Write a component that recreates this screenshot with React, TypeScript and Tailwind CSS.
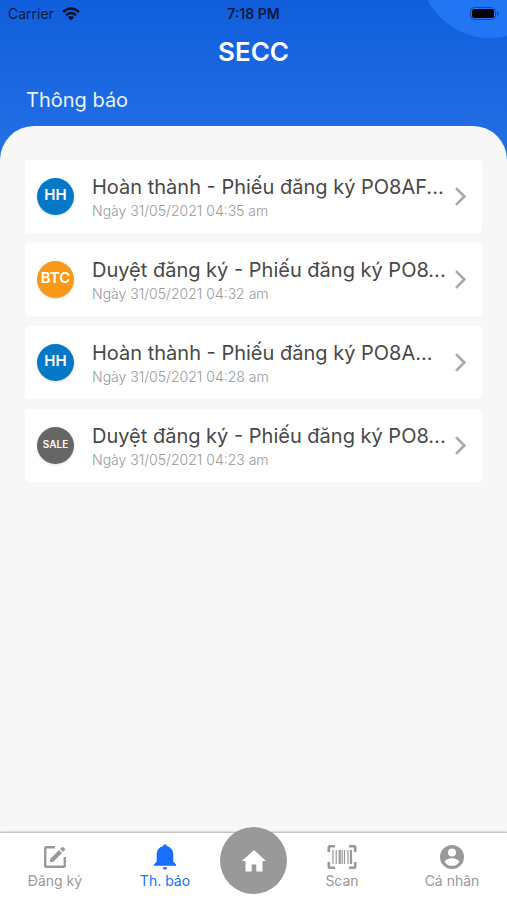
import type { ReactNode } from "react";

type Notice = { badge: string; title: string; date: string; tone: string };

const notices: Notice[] = [
  { badge: "HH", title: "Hoàn thành - Phiếu đăng ký PO8AF...", date: "Ngày 31/05/2021 04:35 am", tone: "bg-[#0378c6] text-[15px]" },
  { badge: "BTC", title: "Duyệt đăng ký - Phiếu đăng ký PO8...", date: "Ngày 31/05/2021 04:32 am", tone: "bg-[#f99a17] text-[15px]" },
  { badge: "HH", title: "Hoàn thành - Phiếu đăng ký PO8A...", date: "Ngày 31/05/2021 04:28 am", tone: "bg-[#0378c6] text-[15px]" },
  { badge: "SALE", title: "Duyệt đăng ký - Phiếu đăng ký PO8...", date: "Ngày 31/05/2021 04:23 am", tone: "bg-[#666666] text-[10px]" },
];

function StatusBar() {
  return (
    <div className="relative grid h-7 grid-cols-3 items-center px-2 text-sm text-[#061a3c]">
      <div className="flex items-center gap-2 leading-5">
        Carrier
        <svg width="18" height="14" viewBox="0 0 18 14" fill="none" stroke="#061024" strokeWidth="2.6" aria-hidden="true">
          <path d="M1 5Q9-2 17 5" />
          <path d="M4 8.2Q9 3.8 14 8.2" />
          <path d="M9 13.5 5.8 10.3Q9 7.8 12.2 10.3Z" fill="#061024" stroke="none" />
        </svg>
      </div>
      <div className="text-center font-semibold">7:18 PM</div>
      <svg className="justify-self-end" width="30" height="14" viewBox="0 0 30 14" aria-hidden="true">
        <rect x="1.5" y="0.5" width="25" height="12" rx="4" fill="none" stroke="#16479b" />
        <rect x="3" y="2" width="22" height="9" rx="2.5" fill="#000" />
        <path d="M28 4q3 2.500 0 5z" fill="#16479b" />
      </svg>
    </div>
  );
}

function NoticeRow({ notice }: { notice: Notice }) {
  return (
    <li>
      <a href="#notice" className="flex h-[73px] items-center rounded-sm bg-white pl-3 pr-4">
        <span className={`flex size-[37px] shrink-0 items-center justify-center rounded-full pb-0.5 font-semibold text-white shadow-sm ${notice.tone}`}>
          {notice.badge}
        </span>
        <span className="ml-[18px] min-w-0 flex-1">
          <span className="block overflow-hidden whitespace-nowrap text-xl leading-7 text-[#484848]">{notice.title}</span>
          <span className="block text-sm font-light leading-5 text-[#999]">{notice.date}</span>
        </span>
        <svg className="shrink-0" width="11" height="19" viewBox="0 0 11 19" fill="none" stroke="#a9a9a9" strokeWidth="2.6" aria-hidden="true">
          <path d="m1 1.2 8.3 8.3L1 17.8" />
        </svg>
      </a>
    </li>
  );
}

function Tab({ label, active, children }: { label: string; active?: boolean; children: ReactNode }) {
  return (
    <button type="button" className={`flex min-w-0 flex-1 flex-col items-center pt-2.5 text-sm leading-5 ${active ? "text-[#166fff]" : "text-[#999]"}`}>
      <span className="flex h-7 items-center">{children}</span>
      {label}
    </button>
  );
}

export default function App() {
  return (
    <div className="flex min-h-screen flex-col bg-[#f7f7f7] font-['Inter','Noto_Sans',sans-serif]">
      <header className="relative overflow-hidden bg-linear-to-b from-[#105edc] to-[#2470e5]">
        <div className="absolute -right-[53px] -top-[102px] size-[140px] rounded-full bg-[#2276f4]" />
        <StatusBar />
        <h1 className="relative text-center text-[26px] font-semibold leading-12 text-white">SECC</h1>
        <h2 className="px-[26px] pt-2.5 text-xl leading-7 text-[#e9f2ff]">Thông báo</h2>
        <div className="mt-3 h-[34px] rounded-t-[36px] bg-[#f7f7f7]" />
      </header>

      <main className="flex-1 px-[25px] pb-6">
        <ul className="flex flex-col gap-2.5">
          {notices.map((notice) => (
            <NoticeRow key={notice.date} notice={notice} />
          ))}
        </ul>
      </main>

      <nav className="sticky bottom-0 flex h-[67px] bg-white shadow-[0_-1px_2px_rgba(0,0,0,0.3)]">
        <Tab label="Đăng ký">
          <svg width="24" height="24" viewBox="0 0 24 24" fill="none" stroke="currentColor" strokeWidth="2.4" aria-hidden="true">
            <path d="M12 2.200H3.200a1 1 0 0 0-1 1v17.600a1 1 0 0 0 1 1h17.600a1 1 0 0 0 1-1V12" strokeLinejoin="round" />
            <path d="M7 14v3h3l9-9-3-3zM17 4l3 3 1.800-1.800a1 1 0 0 0 0-1.400l-1.600-1.600a1 1 0 0 0-1.400 0z" fill="currentColor" stroke="none" />
          </svg>
        </Tab>
        <Tab label="Th. báo" active>
          <svg width="22" height="26" viewBox="0 0 22 26" fill="currentColor" aria-hidden="true">
            <path d="M11 .5c-1.200 0-1.900.7-2.100 1.700C5 3.200 2.700 6.200 2.700 10.300v7.200L0 20.500v1.300h22v-1.300l-2.700-3v-7.200c0-4.100-2.300-7.100-6.200-8.100C12.900 1.200 12.200.5 11 .5zM8.800 23.200h4.400c-.2 1.400-1 2.300-2.200 2.300s-2-.9-2.200-2.300z" />
          </svg>
        </Tab>
        <div className="flex w-[67px] shrink-0 justify-center">
          <button type="button" aria-label="Home" className="-mt-1.5 flex size-[67px] items-center justify-center rounded-full bg-[#999] text-white">
            <svg width="24" height="22" viewBox="0 0 24 22" fill="currentColor" aria-hidden="true">
              <path d="M12 0 0 11h3.500v10.500h6.200v-7h4.600v7h6.200V11H24z" />
            </svg>
          </button>
        </div>
        <Tab label="Scan">
          <svg width="30" height="24" viewBox="0 0 30 24" fill="none" stroke="currentColor" aria-hidden="true">
            <path d="M1.800 7V2.300a1 1 0 0 1 1-1H8M22 1.300h5.200a1 1 0 0 1 1 1V7M28.200 17v4.700a1 1 0 0 1-1 1H22M8 22.700H2.800a1 1 0 0 1-1-1V17" strokeWidth="2.600" />
            <path d="M6 5v14M9.200 5v14M17.500 5v14M21 5v14" strokeWidth="1.200" />
            <path d="M12.700 5v14M24 5v14" strokeWidth="2.200" />
            <path d="M15.200 5v14" strokeWidth="1.200" />
          </svg>
        </Tab>
        <Tab label="Cá nhân">
          <svg width="24" height="24" viewBox="0 0 24 24" fill="currentColor" aria-hidden="true">
            <path fillRule="evenodd" d="M12 0a12 12 0 1 0 0 24 12 12 0 0 0 0-24zm0 3.600a4 4 0 1 1 0 8 4 4 0 0 1 0-8zm0 17.200a8.600 8.600 0 0 1-7.200-3.900c0-2.400 4.800-3.700 7.200-3.700s7.200 1.300 7.200 3.700a8.600 8.600 0 0 1-7.200 3.900z" />
          </svg>
        </Tab>
      </nav>
    </div>
  );
}
